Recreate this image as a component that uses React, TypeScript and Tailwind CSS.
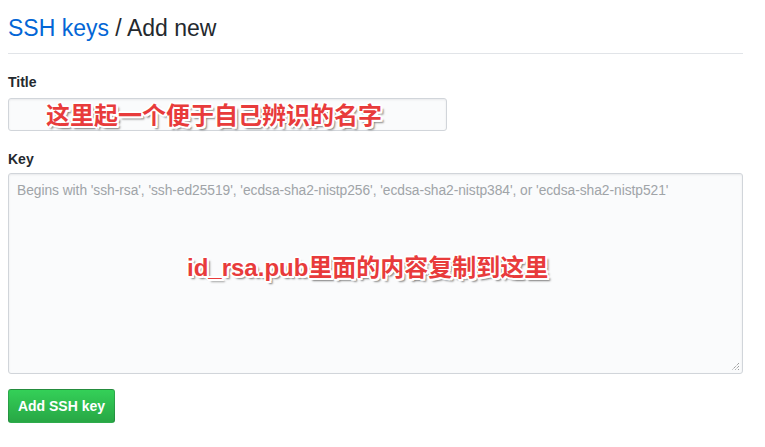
export default function App() {
  const outline =
    '[text-shadow:1px_1px_0_#fff,-1px_-1px_0_#fff,1px_-1px_0_#fff,-1px_1px_0_#fff,2px_0_0_#fff,-2px_0_0_#fff,0_2px_0_#fff,0_-2px_0_#fff,2px_2px_0_#fff,3px_3px_2px_#7a7a7a]';

  return (
    <div className="min-h-screen bg-white px-2 font-['Liberation_Sans','Noto_Sans_CJK_SC',sans-serif] text-[#24292e]">
      <div className="w-[735px]">
        {/* header */}
        <div className="border-b border-[#e1e4e8] pt-[14px] pb-[10px]">
          <h2 className="text-[23px] leading-[29px] font-normal">
            <span className="text-[#0366d6]">SSH keys</span> / Add new
          </h2>
        </div>

        <form className="pt-[18px]">
          <label className="block text-[14px] leading-[20px] font-semibold">Title</label>
          <div className="relative mt-[6px] h-[33px] w-[439px] rounded-[3px] border border-[#d1d5da] bg-[#fafbfc] shadow-[inset_0_1px_2px_rgba(27,31,35,0.075)]">
            <span
              className={`absolute left-[37px] top-[0px] whitespace-nowrap text-[24px] leading-[30px] font-bold text-[#e83b3b] font-['Noto_Sans_CJK_SC',sans-serif] ${outline}`}
            >
              这里起一个便于自己辨识的名字
            </span>
          </div>

          <label className="mt-[18px] block text-[14px] leading-[20px] font-semibold">Key</label>
          <div className="relative mt-[4px] h-[201px] w-[735px] rounded-[3px] border border-[#d1d5da] bg-[#fafbfc] shadow-[inset_0_1px_2px_rgba(27,31,35,0.075)]">
            <p className="px-[8px] pt-[8px] text-[13.8px] leading-[18px] tracking-[-0.05px] text-[#a0a4a8]">
              Begins with 'ssh-rsa', 'ssh-ed25519', 'ecdsa-sha2-nistp256', 'ecdsa-sha2-nistp384', or 'ecdsa-sha2-nistp521'
            </p>
            <span
              className={`absolute left-[178px] top-[77px] whitespace-nowrap text-[24px] leading-[30px] font-bold text-[#e83b3b] ${outline}`}
            >
              <span className="font-['Liberation_Sans',sans-serif]">id_rsa.pub</span>
              <span className="font-['Noto_Sans_CJK_SC',sans-serif]">里面的内容复制到这里</span>
            </span>
            <svg className="absolute right-[2px] bottom-[2px]" width="10" height="10" viewBox="0 0 10 10">
              <path d="M9 2 L2 9 M9 5 L5 9 M9 8 L8 9" stroke="#777" strokeWidth="1" strokeDasharray="1 1" />
            </svg>
          </div>

          <div className="pt-[15px]">
            <button
              type="button"
              className="h-[34px] w-[107px] rounded-[3px] border border-[rgba(27,31,35,0.2)] bg-gradient-to-b from-[#34d058] to-[#28a745] text-[14px] font-bold text-white"
            >
              Add SSH key
            </button>
          </div>
        </form>
      </div>
    </div>
  );
}
